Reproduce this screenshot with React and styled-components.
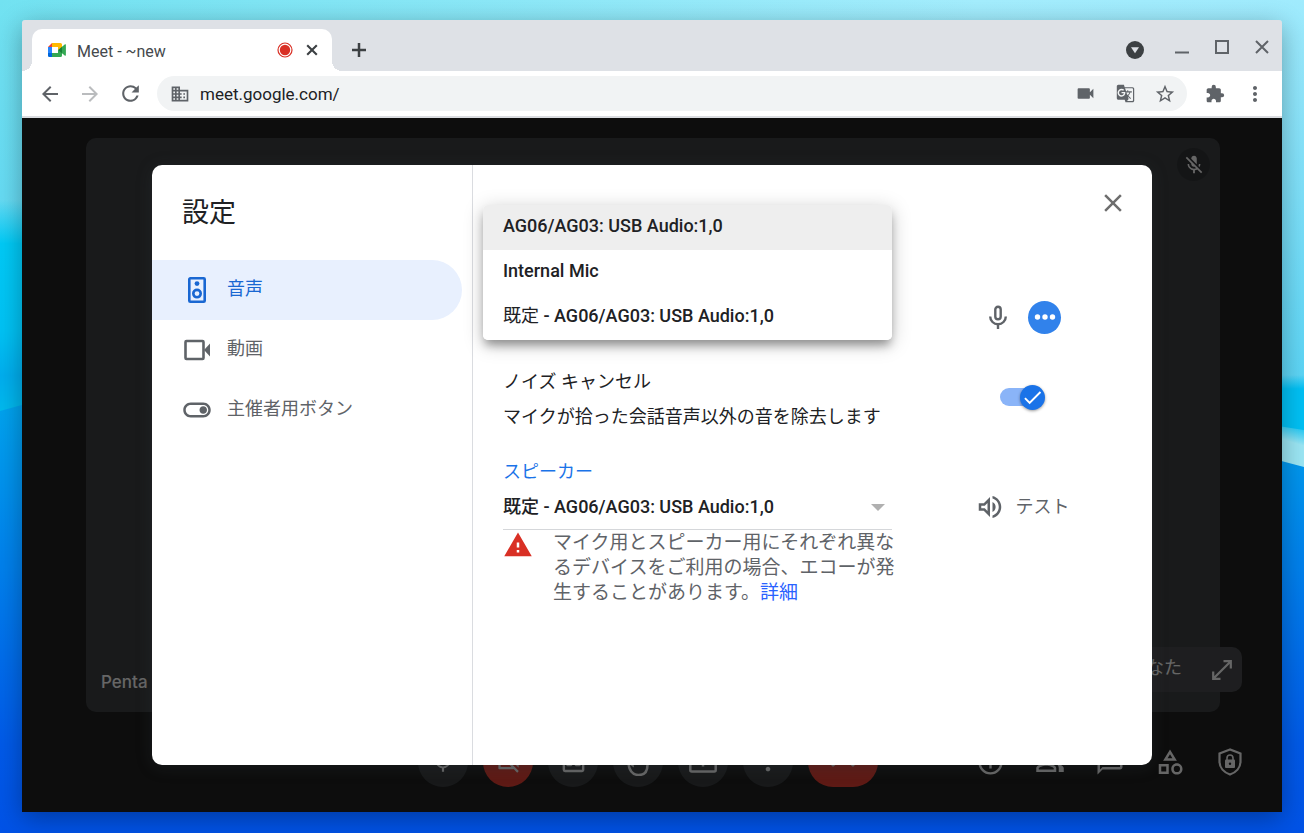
import React, { useState } from 'react';
import styled, { createGlobalStyle } from 'styled-components';
import {
  MdArrowBack,
  MdArrowForward,
  MdCallEnd,
  MdCheck,
  MdChatBubbleOutline,
  MdClose,
  MdDomain,
  MdExtension,
  MdGTranslate,
  MdMicNone,
  MdMicOff,
  MdMoreVert,
  MdOutlineCategory,
  MdOutlineClosedCaption,
  MdOutlineInfo,
  MdOutlinePeopleAlt,
  MdOutlineToggleOn,
  MdOutlineVideocamOff,
  MdOutlineVolumeUp,
  MdRefresh,
  MdStarBorder,
  MdVideocam,
  MdWarning,
} from 'react-icons/md';

const USB_AUDIO = 'AG06/AG03: USB Audio:1,0';

const MIC_OPTIONS = [
  { id: 'usb', name: USB_AUDIO },
  { id: 'internal', name: 'Internal Mic' },
  { id: 'default', prefix: '既定', name: ` - ${USB_AUDIO}` },
];

const SPEAKER_OPTIONS = [USB_AUDIO, `既定 - ${USB_AUDIO}`];

const SpeakerIcon = () => (
  <svg width="30" height="30" viewBox="0 0 30 30" fill="none" stroke="currentColor" strokeWidth="2.600">
    <rect x="7.300" y="3.300" width="15.400" height="23.400" rx="1" />
    <circle cx="15" cy="8.600" r="2.400" fill="currentColor" stroke="none" />
    <circle cx="15" cy="18.600" r="3.700" />
  </svg>
);

const VideoIcon = () => (
  <svg width="30" height="30" viewBox="0 0 30 30">
    <rect x="3.500" y="6" width="18" height="18" rx="1" fill="none" stroke="currentColor" strokeWidth="2.600" />
    <path d="M22 15l6-6.500v13z" fill="currentColor" />
  </svg>
);

const MicIcon = () => (
  <svg width="30" height="30" viewBox="0 0 30 30" fill="none" stroke="currentColor" strokeWidth="2.400">
    <rect x="12.300" y="4.700" width="5.400" height="12.600" rx="2.700" />
    <path d="M7.200 14.500a7.800 7.800 0 0015.600 0M15 22.300V27" />
  </svg>
);

const ExpandIcon = () => (
  <svg width="26" height="26" viewBox="0 0 26 26" fill="none" stroke="currentColor" strokeWidth="2.200">
    <path d="M14.500 4.200h7.300v7.300M11.500 21.800H4.200v-7.300M21.800 4.200L4.200 21.800" />
  </svg>
);

const PlusIcon = () => (
  <svg width="16" height="16" viewBox="0 0 16 16">
    <path d="M8 1v14M1 8h14" stroke="currentColor" strokeWidth="2.500" />
  </svg>
);

const TabCloseIcon = () => (
  <svg width="12" height="12" viewBox="0 0 12 12">
    <path d="M1.200 1.200l9.600 9.600M10.800 1.200l-9.600 9.600" stroke="currentColor" strokeWidth="2.100" />
  </svg>
);

const MeetLogo = () => (
  <svg width="20" height="16" viewBox="0 0 20 16">
    <path d="M1 5h4v6H1z" fill="#2684fc" />
    <path d="M1 5l4-4v4z" fill="#ea4335" />
    <path d="M5 1h8.500a1.500 1.500 0 011.500 1.500V7l-4 1V5H5z" fill="#ffba00" />
    <path d="M1 11h4v4H2.300A1.300 1.300 0 011 13.700z" fill="#0066da" />
    <path d="M5 11h6V8l4 1v4.500a1.500 1.500 0 01-1.500 1.500H5z" fill="#34a853" />
    <path d="M11 8l4-3.300v6.600z" fill="#188038" />
    <path d="M15 4.700l3-2.400c.4-.3.900 0 .9.400v10.600c0 .4-.5.700-.9.400l-3-2.400z" fill="#34a853" />
  </svg>
);

const RecordIcon = () => (
  <svg width="16" height="16" viewBox="0 0 16 16">
    <circle cx="8" cy="8" r="7" fill="none" stroke="#d93025" strokeWidth="1.200" />
    <circle cx="8" cy="8" r="5.200" fill="#d93025" />
  </svg>
);

const MediaIcon = () => (
  <svg width="18" height="18" viewBox="0 0 18 18">
    <circle cx="9" cy="9" r="9" fill="#3c4043" />
    <path d="M5 6.300h8L9 12.300z" fill="#dee1e6" />
  </svg>
);

const MinimizeIcon = () => (
  <svg width="16" height="16" viewBox="0 0 16 16">
    <path d="M1 13.500h14" stroke="#5f6368" strokeWidth="2" />
  </svg>
);

const MaximizeIcon = () => (
  <svg width="16" height="16" viewBox="0 0 16 16">
    <rect x="2" y="2" width="12" height="12" fill="none" stroke="#5f6368" strokeWidth="2" />
  </svg>
);

const CloseWindowIcon = () => (
  <svg width="16" height="16" viewBox="0 0 16 16">
    <path d="M2 2l12 12M14 2L2 14" stroke="#5f6368" strokeWidth="2" />
  </svg>
);

const HandIcon = () => (
  <svg width="28" height="28" viewBox="0 0 28 28" fill="none" stroke="currentColor" strokeWidth="2.500">
    <path d="M4.500 14l4 3V5m4 8V3m4 10V5m4 8V8M4.500 14c0 8 4 13 10 13 6 0 9-4 9-10V9" />
  </svg>
);

const PresentIcon = () => (
  <svg width="28" height="28" viewBox="0 0 28 28" fill="none" stroke="currentColor" strokeWidth="2.500">
    <rect x="1.300" y="5" width="25.400" height="18.500" rx="1.500" />
    <path d="M14 18.500V10m-4 4l4-4 4 4" />
  </svg>
);

const ShieldIcon = () => (
  <svg width="28" height="30" viewBox="0 0 28 30">
    <path
      d="M14 2.500L3.500 6.500v8c0 6.300 4.500 11 10.500 13 6-2 10.500-6.700 10.500-13v-8z"
      fill="none"
      stroke="currentColor"
      strokeWidth="2.200"
    />
    <rect x="9" y="12.500" width="10" height="8.500" rx="1" fill="currentColor" />
    <path d="M11 13v-2a3 3 0 016 0v2" fill="none" stroke="currentColor" strokeWidth="1.600" />
    <circle cx="14" cy="16.700" r="1.200" fill="#202124" />
  </svg>
);

const DotsIcon = () => (
  <svg width="24" height="8" viewBox="0 0 24 8" fill="#fff">
    <circle cx="4.500" cy="4" r="2.700" />
    <circle cx="12" cy="4" r="2.700" />
    <circle cx="19.500" cy="4" r="2.700" />
  </svg>
);

const ArrowIcon = () => (
  <svg width="14" height="7" viewBox="0 0 14 7">
    <path d="M0 0h14L7 7z" fill="#b0b0b0" />
  </svg>
);

const Wallpaper = () => (
  <WallpaperSvg viewBox="0 0 1304 833" preserveAspectRatio="none" aria-hidden="true">
    <defs>
      <linearGradient id="sky" x1="0" y1="0" x2="1" y2="0">
        <stop offset="0" stopColor="#72e2f1" />
        <stop offset="0.75" stopColor="#a4edfd" />
        <stop offset="1" stopColor="#a0ebfd" />
      </linearGradient>
      <linearGradient id="skyFade" x1="0" y1="0" x2="0" y2="1">
        <stop offset="0" stopColor="#5ad4f5" stopOpacity="0" />
        <stop offset="1" stopColor="#5ad4f5" />
      </linearGradient>
      <linearGradient id="cyan" x1="0" y1="0" x2="0" y2="1">
        <stop offset="0" stopColor="#00caf6" stopOpacity="0" />
        <stop offset="0.2" stopColor="#00caf6" />
        <stop offset="0.6" stopColor="#00c2f4" />
        <stop offset="0.8" stopColor="#00aeee" />
        <stop offset="1" stopColor="#00bcee" />
      </linearGradient>
      <linearGradient id="cyanRight" x1="0" y1="0" x2="0" y2="1">
        <stop offset="0" stopColor="#00c0f4" stopOpacity="0" />
        <stop offset="0.2" stopColor="#00c0f4" />
        <stop offset="1" stopColor="#00c0f4" />
      </linearGradient>
      <linearGradient id="band" gradientUnits="userSpaceOnUse" x1="1290" y1="420" x2="1284" y2="440">
        <stop offset="0" stopColor="#9be6f4" stopOpacity="0" />
        <stop offset="1" stopColor="#9be6f4" />
      </linearGradient>
      <linearGradient id="deep" gradientUnits="userSpaceOnUse" x1="0" y1="390" x2="0" y2="833">
        <stop offset="0" stopColor="#00a6ee" />
        <stop offset="0.4" stopColor="#0080ec" />
        <stop offset="0.8" stopColor="#005ae8" />
        <stop offset="1" stopColor="#0052e6" />
      </linearGradient>
    </defs>
    <rect width="1304" height="833" fill="url(#sky)" />
    <rect width="1304" height="390" fill="url(#skyFade)" />
    <rect x="652" y="390" width="652" height="60" fill="#5ad4f5" />
    <rect y="200" width="652" height="220" fill="url(#cyan)" />
    <rect x="652" y="375" width="652" height="70" fill="url(#cyanRight)" />
    <path d="M652 330l652 100v50H652z" fill="url(#band)" />
    <path d="M0 411Q400 300 652 330t652 137v366H0z" fill="url(#deep)" />
  </WallpaperSvg>
);

const App = () => {
  const [mic, setMic] = useState('usb');
  const [speaker, setSpeaker] = useState(SPEAKER_OPTIONS[1]);
  const [noiseCancel, setNoiseCancel] = useState(true);
  const [url, setUrl] = useState('meet.google.com/');

  return (
    <Desktop>
      <GlobalStyle />
      <Wallpaper />
      <BrowserWindow>
        <TabStrip>
          <Tab>
            <MeetLogo />
            <TabTitle>Meet - ~new</TabTitle>
            <RecordIcon />
            <TabClose aria-label="タブを閉じる"><TabCloseIcon /></TabClose>
          </Tab>
          <StripButton aria-label="新しいタブ"><PlusIcon /></StripButton>
          <StripSpacer />
          <StripButton aria-label="タブを検索"><MediaIcon /></StripButton>
          <WindowControls>
            <ControlButton aria-label="最小化"><MinimizeIcon /></ControlButton>
            <ControlButton aria-label="最大化"><MaximizeIcon /></ControlButton>
            <ControlButton aria-label="閉じる"><CloseWindowIcon /></ControlButton>
          </WindowControls>
        </TabStrip>

        <Toolbar>
          <ToolButton aria-label="戻る"><MdArrowBack size={24} /></ToolButton>
          <ToolButton aria-label="進む" disabled><MdArrowForward size={24} /></ToolButton>
          <ToolButton aria-label="再読み込み"><MdRefresh size={25} /></ToolButton>
          <Omnibox>
            <MdDomain size={20} />
            <UrlInput aria-label="アドレス" value={url} onChange={(e) => setUrl(e.target.value)} />
            <ToolButton aria-label="カメラ"><MdVideocam size={21} /></ToolButton>
            <ToolButton aria-label="翻訳"><MdGTranslate size={19} /></ToolButton>
            <ToolButton aria-label="ブックマーク"><MdStarBorder size={22} /></ToolButton>
          </Omnibox>
          <ToolButton aria-label="拡張機能"><MdExtension size={20} /></ToolButton>
          <ToolButton aria-label="メニュー"><MdMoreVert size={24} /></ToolButton>
        </Toolbar>

        <Page>
          <Stage>
            <VideoTile>
              <MutedBadge><MdMicOff size={22} /></MutedBadge>
              <TileName>Penta</TileName>
              <SelfView>
                <Caption>あなた</Caption>
                <ExpandIcon />
              </SelfView>
            </VideoTile>
          </Stage>
          <CallBar>
            <CallControls>
              <CallButton aria-label="マイク"><MdMicNone size={26} /></CallButton>
              <CallButton $danger aria-label="カメラ"><MdOutlineVideocamOff size={27} /></CallButton>
              <CallButton aria-label="字幕"><MdOutlineClosedCaption size={29} /></CallButton>
              <CallButton aria-label="挙手"><HandIcon /></CallButton>
              <CallButton aria-label="画面を共有"><PresentIcon /></CallButton>
              <CallButton aria-label="その他"><MdMoreVert size={28} /></CallButton>
              <CallButton $danger $wide aria-label="通話から退出"><MdCallEnd size={28} /></CallButton>
            </CallControls>
            <CallPanels>
              <PanelButton aria-label="会議の詳細"><MdOutlineInfo size={29} /></PanelButton>
              <PanelButton aria-label="参加者"><MdOutlinePeopleAlt size={30} /></PanelButton>
              <PanelButton aria-label="チャット"><MdChatBubbleOutline size={30} /></PanelButton>
              <PanelButton aria-label="アクティビティ"><MdOutlineCategory size={30} /></PanelButton>
              <PanelButton aria-label="主催者用ボタン"><ShieldIcon /></PanelButton>
            </CallPanels>
          </CallBar>

          <Scrim>
            <Dialog role="dialog" aria-labelledby="settings-title">
              <Sidebar>
                <DialogTitle id="settings-title">設定</DialogTitle>
                <NavItem $active>
                  <SpeakerIcon />
                  <Caption>音声</Caption>
                </NavItem>
                <NavItem>
                  <VideoIcon />
                  <Caption>動画</Caption>
                </NavItem>
                <NavItem>
                  <MdOutlineToggleOn size={30} />
                  <Caption>主催者用ボタン</Caption>
                </NavItem>
              </Sidebar>
              <Panel>
                <PanelHeader>
                  <CloseButton aria-label="閉じる"><MdClose size={30} /></CloseButton>
                </PanelHeader>

                <SettingRow>
                  <MicField>
                    <Menu role="listbox" aria-label="マイク">
                      {MIC_OPTIONS.map(({ id, prefix, name }) => (
                        <MenuItem
                          key={id}
                          role="option"
                          aria-selected={id === mic}
                          $selected={id === mic}
                          onClick={() => setMic(id)}
                        >
                          {prefix && <Prefix>{prefix}</Prefix>}
                          {name}
                        </MenuItem>
                      ))}
                    </Menu>
                  </MicField>
                  <RowAction $height={44}>
                    <MicIcon />
                    <LevelDot><DotsIcon /></LevelDot>
                  </RowAction>
                </SettingRow>

                <NoiseRow>
                  <NoiseLabel htmlFor="noise">
                    ノイズ キャンセル
                    <br />
                    マイクが拾った会話音声以外の音を除去します
                  </NoiseLabel>
                  <RowAction $height={66}>
                    <Switch>
                      <SwitchInput
                        id="noise"
                        type="checkbox"
                        checked={noiseCancel}
                        onChange={(e) => setNoiseCancel(e.target.checked)}
                      />
                      <SwitchThumb $on={noiseCancel}>
                        <MdCheck size={23} />
                      </SwitchThumb>
                    </Switch>
                  </RowAction>
                </NoiseRow>

                <FieldLabel htmlFor="speaker">スピーカー</FieldLabel>
                <SettingRow>
                  <SelectBox>
                    <Select id="speaker" value={speaker} onChange={(e) => setSpeaker(e.target.value)}>
                      {SPEAKER_OPTIONS.map((name) => (
                        <option key={name}>{name}</option>
                      ))}
                    </Select>
                    <ArrowIcon />
                  </SelectBox>
                  <RowAction $height={36}>
                    <TestButton>
                      <MdOutlineVolumeUp size={30} />
                      テスト
                    </TestButton>
                  </RowAction>
                </SettingRow>
                <Warning>
                  <MdWarning size={30} />
                  <p>
                    マイク用とスピーカー用にそれぞれ異なるデバイスをご利用の場合、エコーが発生することがあります。
                    <a href="#details">詳細</a>
                  </p>
                </Warning>
              </Panel>
            </Dialog>
          </Scrim>
        </Page>
      </BrowserWindow>
    </Desktop>
  );
};

const GlobalStyle = createGlobalStyle`
  * {
    box-sizing: border-box;
  }
  body {
    margin: 0;
    font-family: Roboto, "Noto Sans CJK JP", sans-serif;
    font-size: 18px;
    line-height: 24px;
    color: #202124;
  }
  button, input, select {
    margin: 0;
    padding: 0;
    border: none;
    background: none;
    font: inherit;
    color: inherit;
    outline: none;
  }
  svg {
    flex-shrink: 0;
  }
`;

const Desktop = styled.div`
  position: relative;
  display: flex;
  min-height: 100vh;
  padding: 20px 22px 21px;
`;

const WallpaperSvg = styled.svg`
  position: absolute;
  inset: 0;
  width: 100%;
  height: 100%;
`;

const BrowserWindow = styled.div`
  position: relative;
  flex: 1;
  display: flex;
  flex-direction: column;
  border-radius: 3px 3px 0 0;
  box-shadow: 0 6px 26px rgba(0, 0, 0, 0.32);
`;

const TabStrip = styled.div`
  display: flex;
  align-items: flex-end;
  height: 51px;
  padding: 3px 0 0 10px;
  background: #dee1e6;
  border-radius: 3px 3px 0 0;
`;

const Tab = styled.div`
  position: relative;
  display: flex;
  align-items: center;
  width: 300px;
  height: 42px;
  padding: 0 8px 0 15px;
  background: #fff;
  border-radius: 10px 10px 0 0;

  &::before,
  &::after {
    content: '';
    position: absolute;
    bottom: 0;
    width: 10px;
    height: 10px;
  }
  &::before {
    right: 100%;
    background: radial-gradient(circle at 0 0, #dee1e6 10px, #fff 10px);
  }
  &::after {
    left: 100%;
    background: radial-gradient(circle at 100% 0, #dee1e6 10px, #fff 10px);
  }
`;

const TabTitle = styled.span`
  flex: 1;
  padding: 4px 0 0 10px;
  font-size: 16px;
  color: #45494d;
`;

const IconButton = styled.button`
  display: flex;
  align-items: center;
  justify-content: center;
  flex-shrink: 0;
  cursor: pointer;
`;

const TabClose = styled(IconButton)`
  width: 24px;
  height: 24px;
  margin-left: 7px;
  color: #3c4043;
`;

const StripButton = styled(IconButton)`
  width: 40px;
  height: 42px;
  margin: 0 7px;
  color: #3c4043;
`;

const StripSpacer = styled.div`
  flex: 1;
`;

const WindowControls = styled.div`
  display: flex;
  align-self: stretch;
`;

const ControlButton = styled(IconButton)`
  width: 40px;
`;

const Toolbar = styled.div`
  display: flex;
  align-items: center;
  height: 47px;
  padding: 0 7px 0 8px;
  background: #fff;
  border-bottom: 2px solid #dadce0;
`;

const ToolButton = styled(IconButton)`
  width: 40px;
  height: 35px;
  color: #5f6368;

  &:disabled {
    color: #babcbe;
  }
`;

const Omnibox = styled.div`
  flex: 1;
  display: flex;
  align-items: center;
  height: 35px;
  margin: 0 8px 0 7px;
  padding: 0 2px 0 13px;
  background: #f1f3f4;
  border-radius: 18px;
  color: #5f6368;
`;

const UrlInput = styled.input`
  flex: 1;
  min-width: 0;
  padding-left: 10px;
  font-size: 17px;
  color: #202124;
`;

const Page = styled.main`
  position: relative;
  flex: 1;
  display: flex;
  flex-direction: column;
  background: #212121;
  color: #fff;
`;

const Stage = styled.div`
  flex: 1;
  display: flex;
  padding: 20px 62px 0 64px;
`;

const VideoTile = styled.div`
  position: relative;
  flex: 1;
  background: #3f4245;
  border-radius: 10px;
`;

const MutedBadge = styled.div`
  position: absolute;
  top: 10px;
  right: 10px;
  display: flex;
  align-items: center;
  justify-content: center;
  width: 33px;
  height: 33px;
  background: #343639;
  border-radius: 50%;
`;

const TileName = styled.div`
  position: absolute;
  left: 15px;
  bottom: 18px;
  font-family: Inter, Roboto, sans-serif;
  font-size: 17px;
  font-weight: 500;
`;

const SelfView = styled.div`
  position: absolute;
  right: -22px;
  bottom: 20px;
  display: flex;
  align-items: center;
  justify-content: flex-end;
  gap: 27px;
  width: 290px;
  height: 45px;
  padding-right: 7px;
  background: #4b4d50;
  border-radius: 10px;
`;

const Caption = styled.span`
  padding-bottom: 3px;
`;

const CallBar = styled.div`
  display: grid;
  grid-template-columns: 1fr auto 1fr;
  align-items: center;
  height: 100px;
  padding: 0 22px 0 14px;
`;

const CallControls = styled.div`
  grid-column: 2;
  display: flex;
  gap: 15px;
`;

const CallButton = styled(IconButton)`
  width: ${({ $wide }) => ($wide ? '70px' : '50px')};
  height: 50px;
  background: ${({ $danger }) => ($danger ? '#ea4335' : '#3c4043')};
  border-radius: 25px;
`;

const CallPanels = styled.div`
  display: flex;
  justify-content: flex-end;
`;

const PanelButton = styled(IconButton)`
  width: 60px;
  height: 60px;
`;

const Scrim = styled.div`
  position: absolute;
  inset: 0;
  display: flex;
  align-items: center;
  justify-content: center;
  background: rgba(0, 0, 0, 0.6);
`;

const Dialog = styled.section`
  display: flex;
  width: 100%;
  max-width: 1000px;
  min-height: 600px;
  background: #fff;
  border-radius: 10px;
  box-shadow: 0 2px 16px rgba(50, 60, 64, 0.3);
  color: #202124;
`;

const Sidebar = styled.nav`
  width: 321px;
  border-right: 1px solid #dadce0;
`;

const DialogTitle = styled.h1`
  height: 95px;
  margin: 0;
  padding: 28px 0 0 30px;
  font-size: 27px;
  line-height: 40px;
  font-weight: 400;
`;

const NavItem = styled.button`
  display: flex;
  align-items: center;
  gap: 15px;
  width: 310px;
  height: 60px;
  padding-left: 30px;
  background: ${({ $active }) => ($active ? '#e8f0fe' : 'transparent')};
  border-radius: 0 30px 30px 0;
  color: ${({ $active }) => ($active ? '#1967d2' : '#5f6368')};
  cursor: pointer;
`;

const Panel = styled.div`
  flex: 1;
  padding-left: 30px;
`;

const PanelHeader = styled.div`
  display: flex;
  align-items: flex-start;
  justify-content: flex-end;
  height: 130px;
  padding: 20px 21px 0 0;
`;

const CloseButton = styled(IconButton)`
  width: 36px;
  height: 36px;
  color: #6e6e6e;
`;

const SettingRow = styled.div`
  display: grid;
  grid-template-columns: 389px 1fr;
  align-items: start;
`;

const MicField = styled.div`
  position: relative;
  height: 45px;
`;

const Menu = styled.div`
  position: absolute;
  left: -20px;
  right: 0;
  bottom: 0;
  background: #fff;
  border-radius: 5px;
  box-shadow: 0 7px 10px -2px rgba(0, 0, 0, 0.34), 0 4px 20px rgba(0, 0, 0, 0.22);
  overflow: hidden;
`;

const MenuItem = styled.button`
  display: block;
  width: 100%;
  height: 45px;
  padding: 0 0 3px 20px;
  background: ${({ $selected }) => ($selected ? '#eee' : '#fff')};
  font-weight: 500;
  text-align: left;
  cursor: pointer;
`;

const Prefix = styled.span`
  font-weight: 400;
`;

const RowAction = styled.div`
  display: flex;
  align-items: center;
  justify-content: center;
  gap: 15px;
  height: ${({ $height }) => $height}px;
  color: #5f6368;
`;

const LevelDot = styled.span`
  display: flex;
  align-items: center;
  justify-content: center;
  width: 33px;
  height: 33px;
  background: #3182eb;
  border-radius: 50%;
`;

const NoiseRow = styled(SettingRow)`
  margin: 24px 0 20px;
`;

const NoiseLabel = styled.label`
  line-height: 35px;
`;

const Switch = styled.span`
  position: relative;
  display: flex;
  align-items: center;
  width: 45px;
  height: 25px;
`;

const SwitchInput = styled.input`
  appearance: none;
  width: 43px;
  height: 18px;
  background: #dadce0;
  border-radius: 9px;
  cursor: pointer;

  &:checked {
    background: #8ab4f8;
  }
`;

const SwitchThumb = styled.span`
  position: absolute;
  top: 0;
  left: ${({ $on }) => ($on ? '20px' : '0')};
  display: flex;
  align-items: center;
  justify-content: center;
  width: 25px;
  height: 25px;
  background: ${({ $on }) => ($on ? '#1a73e8' : '#fff')};
  border-radius: 50%;
  box-shadow: 0 1px 3px rgba(0, 0, 0, 0.4);
  color: #fff;
  pointer-events: none;
`;

const FieldLabel = styled.label`
  display: block;
  line-height: 35px;
  color: #1a73e8;
`;

const SelectBox = styled.div`
  display: flex;
  align-items: center;
  height: 41px;
  padding: 0 7px 4px 0;
  border-bottom: 1px solid #d5d7da;
`;

const Select = styled.select`
  appearance: none;
  flex: 1;
  height: 36px;
  font-weight: 500;
  cursor: pointer;
`;

const TestButton = styled(IconButton)`
  gap: 11px;
  height: 36px;
`;

const Warning = styled.div`
  display: flex;
  gap: 20px;
  max-width: 392px;
  color: #d93025;

  p {
    margin: 0;
    font-size: 19px;
    line-height: 25px;
    color: #5f6368;
  }
  a {
    color: #2962ff;
    text-decoration: none;
  }
`;

export default App;
